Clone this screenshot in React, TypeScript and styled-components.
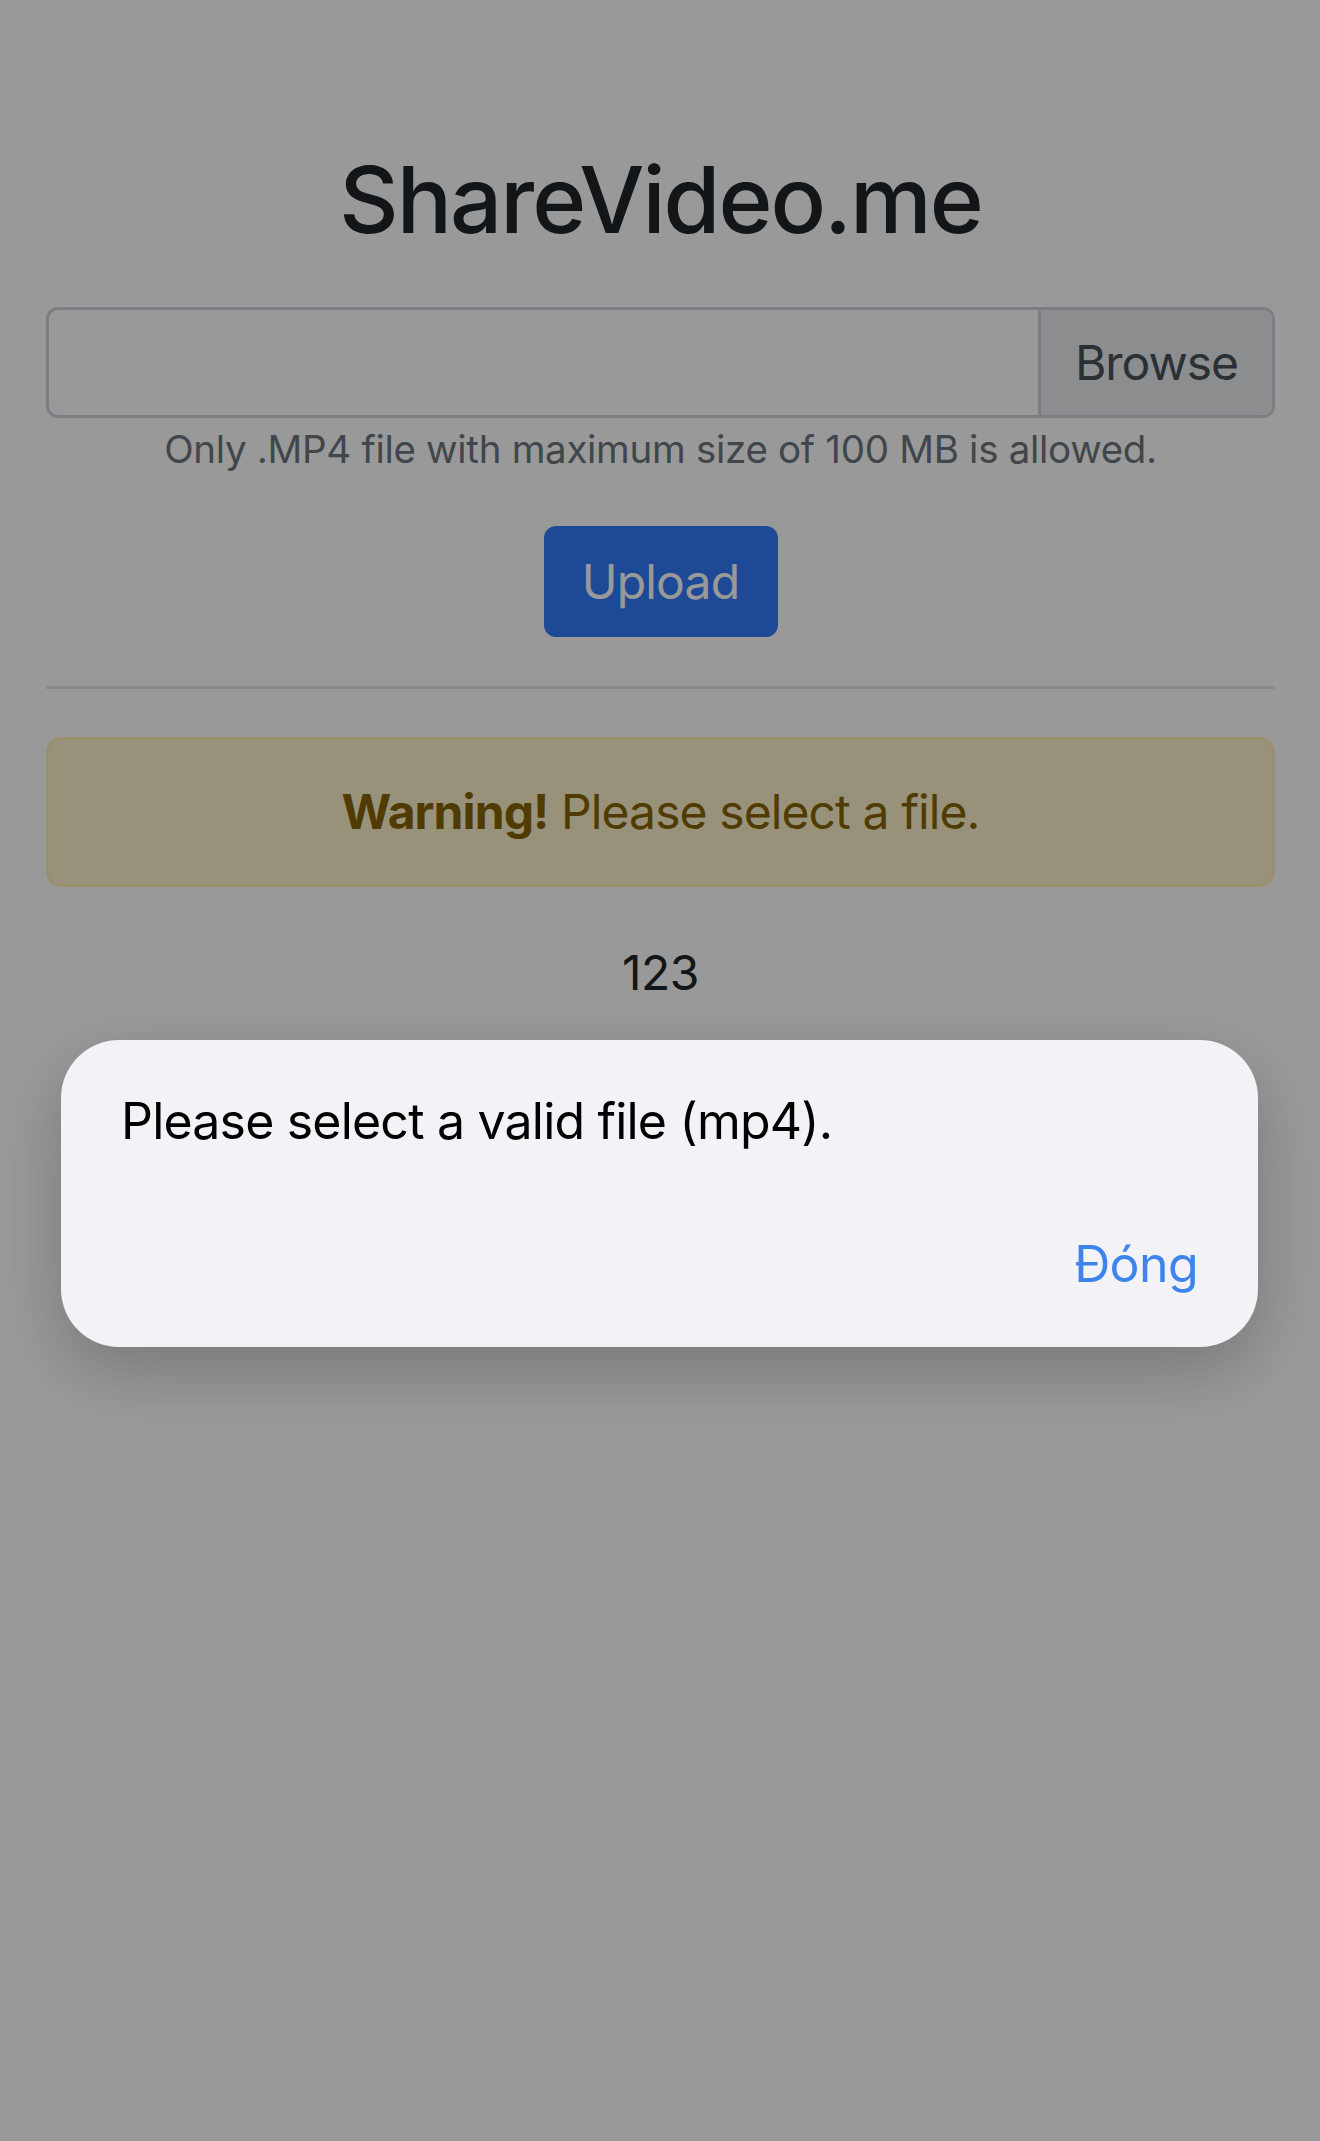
import React from 'react';
import styled, { createGlobalStyle } from 'styled-components';

const GlobalStyle = createGlobalStyle`
  html, body {
    margin: 0;
    padding: 0;
    background: #ffffff;
    font-family: Inter, "Liberation Sans", Arial, sans-serif;
    color: #212529;
  }
  * {
    box-sizing: border-box;
  }
`;

const Page = styled.div`
  min-height: 2141px;
  padding: 0 45px 0 46px;
  display: flex;
  flex-direction: column;
  align-items: stretch;
  text-align: center;
`;

const Title = styled.h1`
  margin: 147px 0 54px;
  font-size: 92px;
  font-weight: 500;
  line-height: 106px;
  letter-spacing: -2px;
  color: #212529;
`;

const FileGroup = styled.div`
  display: flex;
  height: 111px;
  border: 3px solid #ced4da;
  border-radius: 12px;
  overflow: hidden;
  background: #ffffff;
`;

const FileLabel = styled.div`
  flex: 1;
`;

const BrowseButton = styled.div`
  width: 234px;
  display: flex;
  align-items: center;
  justify-content: center;
  border-left: 3px solid #ced4da;
  background: #e9ecef;
  color: #495057;
  font-size: 48px;
  letter-spacing: -1px;
`;

const Hint = styled.small`
  display: block;
  font-size: 38.5px;
  line-height: 63px;
  color: #6c757d;
  letter-spacing: -0.3px;
`;

const UploadButton = styled.button`
  align-self: center;
  margin-top: 45px;
  width: 234px;
  height: 111px;
  border: none;
  border-radius: 12px;
  background: #327bfa;
  color: #ffffff;
  font-family: inherit;
  font-size: 48px;
  letter-spacing: -0.8px;
`;

const Divider = styled.hr`
  width: 100%;
  margin: 49px 0 48px;
  border: 0;
  border-top: 3px solid rgba(0, 0, 0, 0.1);
`;

const Alert = styled.div`
  padding: 36px 60px;
  border: 3px solid #ffeeba;
  border-radius: 15px;
  background: #fff3cd;
  color: #856404;
  font-size: 48px;
  line-height: 72px;
  letter-spacing: -0.9px;

  strong {
    font-weight: 700;
  }
`;

const Counter = styled.div`
  margin-top: 50px;
  font-size: 48px;
  line-height: 72px;
  letter-spacing: -0.5px;
`;

const Backdrop = styled.div`
  position: fixed;
  inset: 0;
  background: rgba(0, 0, 0, 0.4);
`;

const Dialog = styled.div`
  position: fixed;
  top: 1040px;
  left: 61px;
  width: 1197px;
  height: 307px;
  padding: 50px 60px 52px;
  display: flex;
  flex-direction: column;
  justify-content: space-between;
  border-radius: 58px;
  background: #f2f2f7;
  box-shadow: 0 24px 70px rgba(0, 0, 0, 0.22);
`;

const Message = styled.p`
  margin: 0;
  font-size: 50px;
  line-height: 62px;
  color: #000000;
  letter-spacing: -0.8px;
`;

const Actions = styled.div`
  display: flex;
  justify-content: flex-end;
`;

const CloseButton = styled.button`
  padding: 0;
  border: none;
  background: none;
  font-family: inherit;
  font-size: 50px;
  line-height: 62px;
  color: #3d84ec;
  letter-spacing: -0.6px;
`;

const App: React.FC = () => {
  return (
    <>
      <GlobalStyle />
      <Page>
        <Title>ShareVideo.me</Title>

        <FileGroup>
          <FileLabel />
          <BrowseButton>Browse</BrowseButton>
        </FileGroup>
        <Hint>Only .MP4 file with maximum size of 100 MB is allowed.</Hint>

        <UploadButton>Upload</UploadButton>

        <Divider />

        <Alert>
          <strong>Warning!</strong> Please select a file.
        </Alert>

        <Counter>123</Counter>
      </Page>

      <Backdrop />
      <Dialog>
        <Message>Please select a valid file (mp4).</Message>
        <Actions>
          <CloseButton>Đóng</CloseButton>
        </Actions>
      </Dialog>
    </>
  );
};

export default App;
